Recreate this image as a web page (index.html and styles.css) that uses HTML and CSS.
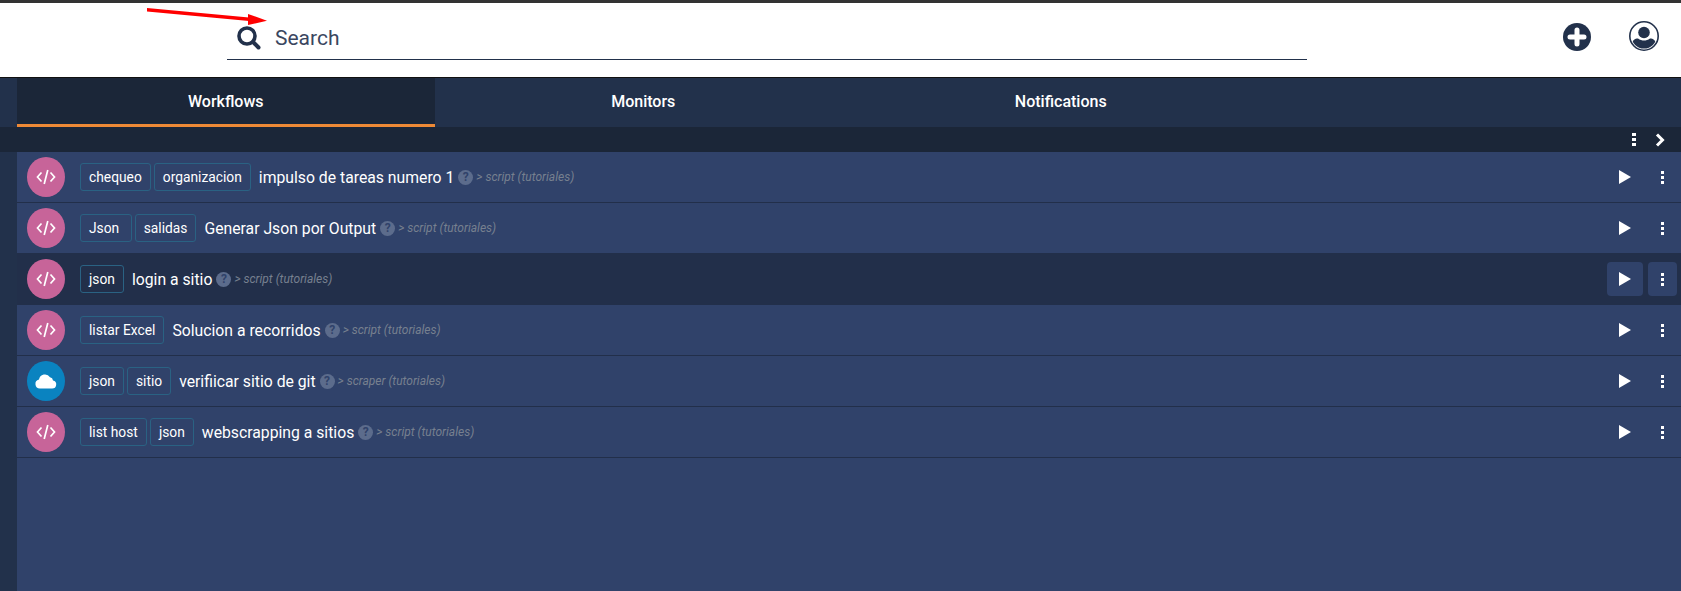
FILE: index.html
```html
<!DOCTYPE html>
<html lang="es">
  <head>
    <meta charset="UTF-8" />
    <meta name="viewport" content="width=device-width, initial-scale=1.0" />
    <title>Workflows</title>
    <link rel="stylesheet" href="styles.css">
  </head>
  <body>
    <header class="topbar">
      <div class="search">
        <svg class="search_icon" viewBox="0 0 24 24"><circle cx="10" cy="10" r="8" fill="none" stroke="#22314b" stroke-width="3.6"/><path d="M16 16 21.5 21.5" stroke="#22314b" stroke-width="4" stroke-linecap="round"/></svg>
        <span class="search_text">Search</span>
      </div>
      <div class="topbar_actions">
        <svg class="add_icon" viewBox="0 0 28 28"><circle cx="14" cy="14" r="14" fill="#22314b"/><path d="M14 7v14M7 14h14" stroke="#fff" stroke-width="5" stroke-linecap="round"/></svg>
        <svg class="user_icon" viewBox="0 0 30 30"><defs><clipPath id="userClip"><circle cx="15" cy="15" r="12.6"/></clipPath></defs><circle cx="15" cy="15" r="14.2" fill="none" stroke="#22314b" stroke-width="1.6"/><circle cx="15" cy="11.5" r="5.8" fill="#22314b"/><path d="M3 30V23c0-3.5 3-5.5 6-5.5 2 1.4 4 2 6 2s4-.6 6-2c3 0 6 2 6 5.5v7z" fill="#22314b" clip-path="url(#userClip)"/></svg>
      </div>
    </header>

    <nav class="tabs">
      <a class="tab tab-active" href="#">Workflows</a>
      <a class="tab" href="#">Monitors</a>
      <a class="tab" href="#">Notifications</a>
    </nav>

    <div class="toolbar">
      <span class="kebab"><i></i><i></i><i></i></span>
      <svg class="chevron" viewBox="0 0 10 14"><path d="M2 1.5 7.5 7 2 12.5" fill="none" stroke="#fff" stroke-width="3"/></svg>
    </div>

    <main class="content">
      <ul class="flow-list">
        <li class="flow">
          <span class="badge badge-script"><svg viewBox="0 0 20 16"><path d="M5.5 3.5 1.5 8l4 4.5M14.5 3.5l4 4.5-4 4.5M11.8 1 8.2 15" fill="none" stroke="#fff" stroke-width="1.7"/></svg></span>
          <span class="tag">chequeo</span><span class="tag">organizacion</span>
          <span class="flow_name">impulso de tareas numero 1</span>
          <span class="help">?</span>
          <span class="flow_meta">&gt; script (tutoriales)</span>
          <span class="flow_actions">
            <button class="action action-play"><svg viewBox="0 0 12 14"><path d="M0 0 12 7 0 14z" fill="#fff"/></svg></button>
            <button class="action action-more"><span class="kebab"><i></i><i></i><i></i></span></button>
          </span>
        </li>
        <li class="flow">
          <span class="badge badge-script"><svg viewBox="0 0 20 16"><path d="M5.5 3.5 1.5 8l4 4.5M14.5 3.5l4 4.5-4 4.5M11.8 1 8.2 15" fill="none" stroke="#fff" stroke-width="1.7"/></svg></span>
          <span class="tag">Json </span><span class="tag">salidas</span>
          <span class="flow_name">Generar Json por Output</span>
          <span class="help">?</span>
          <span class="flow_meta">&gt; script (tutoriales)</span>
          <span class="flow_actions">
            <button class="action action-play"><svg viewBox="0 0 12 14"><path d="M0 0 12 7 0 14z" fill="#fff"/></svg></button>
            <button class="action action-more"><span class="kebab"><i></i><i></i><i></i></span></button>
          </span>
        </li>
        <li class="flow flow-hover">
          <span class="badge badge-script"><svg viewBox="0 0 20 16"><path d="M5.5 3.5 1.5 8l4 4.5M14.5 3.5l4 4.5-4 4.5M11.8 1 8.2 15" fill="none" stroke="#fff" stroke-width="1.7"/></svg></span>
          <span class="tag">json</span>
          <span class="flow_name">login a sitio</span>
          <span class="help">?</span>
          <span class="flow_meta">&gt; script (tutoriales)</span>
          <span class="flow_actions">
            <button class="action action-play"><svg viewBox="0 0 12 14"><path d="M0 0 12 7 0 14z" fill="#fff"/></svg></button>
            <button class="action action-more"><span class="kebab"><i></i><i></i><i></i></span></button>
          </span>
        </li>
        <li class="flow">
          <span class="badge badge-script"><svg viewBox="0 0 20 16"><path d="M5.5 3.5 1.5 8l4 4.5M14.5 3.5l4 4.5-4 4.5M11.8 1 8.2 15" fill="none" stroke="#fff" stroke-width="1.7"/></svg></span>
          <span class="tag">listar Excel</span>
          <span class="flow_name">Solucion a recorridos</span>
          <span class="help">?</span>
          <span class="flow_meta">&gt; script (tutoriales)</span>
          <span class="flow_actions">
            <button class="action action-play"><svg viewBox="0 0 12 14"><path d="M0 0 12 7 0 14z" fill="#fff"/></svg></button>
            <button class="action action-more"><span class="kebab"><i></i><i></i><i></i></span></button>
          </span>
        </li>
        <li class="flow">
          <span class="badge badge-scraper"><svg viewBox="0 0 22 16"><path d="M5 15.5a4.5 4.5 0 0 1-1-8.9A6 6 0 0 1 15 4.2a3.6 3.6 0 0 1 3 3.2 4.1 4.1 0 0 1-1 8.1z" fill="#fff"/></svg></span>
          <span class="tag">json</span><span class="tag">sitio</span>
          <span class="flow_name">verifiicar sitio de git</span>
          <span class="help">?</span>
          <span class="flow_meta">&gt; scraper (tutoriales)</span>
          <span class="flow_actions">
            <button class="action action-play"><svg viewBox="0 0 12 14"><path d="M0 0 12 7 0 14z" fill="#fff"/></svg></button>
            <button class="action action-more"><span class="kebab"><i></i><i></i><i></i></span></button>
          </span>
        </li>
        <li class="flow">
          <span class="badge badge-script"><svg viewBox="0 0 20 16"><path d="M5.5 3.5 1.5 8l4 4.5M14.5 3.5l4 4.5-4 4.5M11.8 1 8.2 15" fill="none" stroke="#fff" stroke-width="1.7"/></svg></span>
          <span class="tag">list host</span><span class="tag">json</span>
          <span class="flow_name">webscrapping a sitios</span>
          <span class="help">?</span>
          <span class="flow_meta">&gt; script (tutoriales)</span>
          <span class="flow_actions">
            <button class="action action-play"><svg viewBox="0 0 12 14"><path d="M0 0 12 7 0 14z" fill="#fff"/></svg></button>
            <button class="action action-more"><span class="kebab"><i></i><i></i><i></i></span></button>
          </span>
        </li>
      </ul>
    </main>

    <svg class="red-arrow" viewBox="0 0 130 24"><path d="M6 3 108 12.5 108 16 6 6.5z" fill="#f00"/><path d="M107 9 126 15.7 107 20z" fill="#f00"/></svg>
  </body>
</html>
```

FILE: styles.css
```css
* {
  box-sizing: border-box;
}

html,
body {
  height: 100%;
}

body {
  margin: 0;
  display: flex;
  flex-direction: column;
  overflow: hidden;
  position: relative;
  font-family: Roboto, "Liberation Sans", sans-serif;
  background: #30426a;
  color: white;
}

.topbar {
  flex: none;
  display: flex;
  justify-content: space-between;
  height: 78px;
  padding-left: 227px;
  background: white;
  border-top: 3px solid #333333;
  border-bottom: 1px solid #111111;
}

.search {
  display: flex;
  align-items: center;
  width: 1080px;
  height: 57px;
  padding: 14px 0 0 10px;
  border-bottom: 1px solid #22314b;
}

.search_icon {
  width: 24px;
  height: 24px;
}

.search_text {
  margin-left: 14px;
  font-size: 21px;
  color: #3a4660;
}

.topbar_actions {
  display: flex;
  align-items: flex-start;
  gap: 38px;
  padding: 19px 22px 0 0;
}

.add_icon {
  width: 28px;
  height: 28px;
  margin-top: 1px;
}

.user_icon {
  width: 30px;
  height: 30px;
  margin-top: -1px;
}

.tabs {
  flex: none;
  display: flex;
  height: 49px;
  padding-left: 17px;
  background: #22314b;
}

.tab {
  width: 417.5px;
  padding-top: 14px;
  text-align: center;
  font-size: 16px;
  font-weight: 500;
  color: white;
  text-decoration: none;
}

.tab-active {
  background: #1b2638;
  border-bottom: 3px solid #ed8936;
}

.toolbar {
  flex: none;
  display: flex;
  justify-content: flex-end;
  align-items: center;
  gap: 19px;
  height: 25px;
  padding-right: 16px;
  background: #1b2638;
}

.kebab {
  display: flex;
  flex-direction: column;
  gap: 2px;
  width: 4px;
}

.kebab i {
  display: block;
  height: 3px;
  background: white;
}

.action .kebab {
  width: 3px;
}

.chevron {
  width: 10px;
  height: 14px;
}

.content {
  flex: 1;
  padding-left: 17px;
  background: linear-gradient(90deg, #22314b 17px, #30426a 17px);
}

.flow-list {
  margin: 0;
  padding: 0;
  list-style: none;
}

.flow {
  display: flex;
  align-items: center;
  height: 51px;
  padding: 0 4px 0 10px;
  background: #30426a;
  border-bottom: 1px solid #222f4a;
}

.flow-hover {
  background: #222f4a;
}

.badge {
  flex: none;
  display: flex;
  justify-content: center;
  align-items: center;
  width: 38px;
  height: 40px;
  margin-right: 15px;
  border-radius: 50%;
}

.badge-script {
  background: #c76499;
}

.badge-script svg {
  width: 20px;
  height: 16px;
}

.badge-scraper {
  background: #0a83c0;
}

.badge-scraper svg {
  width: 22px;
  height: 16px;
}

.tag {
  margin-right: 3px;
  padding: 4px 8px;
  border: 1px solid #2a6283;
  border-radius: 3px;
  font-size: 13.8px;
  line-height: 18px;
  white-space: pre;
}

.flow_name {
  margin-left: 5px;
  font-size: 15.75px;
}

.help {
  width: 15px;
  height: 15px;
  margin-left: 4px;
  border-radius: 50%;
  background: #5c6c8c;
  color: #30426a;
  text-align: center;
  font-size: 12px;
  font-weight: 700;
  line-height: 15px;
}

.flow_meta {
  margin-left: 3px;
  font-size: 12px;
  font-style: italic;
  color: #77808f;
}

.flow_actions {
  display: flex;
  gap: 5px;
  margin-left: auto;
}

.action {
  display: flex;
  justify-content: center;
  align-items: center;
  height: 34px;
  padding: 0;
  border: none;
  border-radius: 4px;
  background: transparent;
}

.action svg {
  width: 12px;
  height: 14px;
}

.action-play {
  width: 36px;
}

.action-more {
  width: 29px;
}

.flow-hover .action {
  background: #30426a;
}

.red-arrow {
  position: absolute;
  left: 141px;
  top: 5px;
  width: 130px;
  height: 24px;
}
```
